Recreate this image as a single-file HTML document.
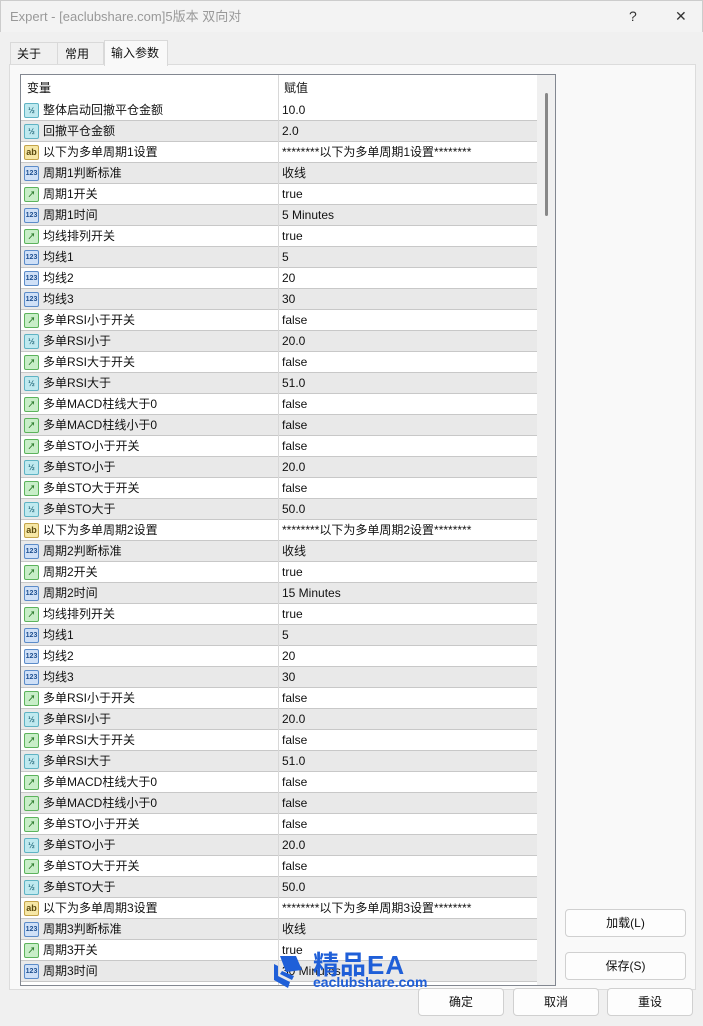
<!DOCTYPE html>
<html><head><meta charset="utf-8"><style>
*{margin:0;padding:0;box-sizing:border-box}
body{width:703px;height:1026px;background:#f0f0f0;font-family:"Liberation Sans","Noto Sans CJK SC",sans-serif;font-size:12px;color:#111;position:relative;overflow:hidden}
.title{position:absolute;left:0;top:0;width:703px;height:32px;background:#f3f3f3;border:1px solid #ccc;border-bottom:none}
.title span{position:absolute;left:9px;top:0;line-height:32px;font-size:13px;color:#999}
.tb{position:absolute;top:0;line-height:30px;font-size:14px;color:#333}
.tab{position:absolute;top:42px;height:23px;border:1px solid #d9d9d9;border-bottom:none;background:#f0f0f0;padding-left:6px;line-height:22px}
.tab.act{top:40px;height:26px;background:#f9f9f9;z-index:2;line-height:24px}
.panel{position:absolute;left:9px;top:64px;width:687px;height:926px;background:#f9f9f9;border:1px solid #dcdcdc}
.list{position:absolute;left:20px;top:74px;width:536px;height:912px;background:#fff;border:1px solid #828790;overflow:hidden}
.hdr{position:absolute;left:0;top:0;width:516px;height:25px;background:#fff;line-height:25px}
.hdr span{position:absolute;top:1px}
.row{position:absolute;left:0;width:516px;height:21px;border-bottom:1px solid #c8c8c8;line-height:20px}
.row.g{background:#e9e9e9}
.row .n{position:absolute;left:22px;top:0}
.row .v{position:absolute;left:261px;top:0}
.vl{position:absolute;left:257px;top:0;width:1px;height:912px;background:#d8d8d8}
.ic{position:absolute;left:3px;top:3px;width:15px;height:15px;border-radius:2px;font-size:8px;font-weight:bold;text-align:center;line-height:13px}
.d{background:#bfe9ef;border:1px solid #5fb3c4;color:#2a6f80}
.a{background:#f6e7a6;border:1px solid #c4a44a;color:#5a4a10;font-size:9px}
.i{background:#cfe0f7;border:1px solid #5c8cc9;color:#1e4f90;font-size:7px}
.b{background:#c8eec8;border:1px solid #5cb35c;color:#2a7a2a}
.sb{position:absolute;left:516px;top:0;width:18px;height:912px;background:#f0f0f0}
.th{position:absolute;left:8px;top:18px;width:3px;height:123px;background:#888;border-radius:2px}
.btn{position:absolute;height:28px;background:#fdfdfd;border:1px solid #d0d0d0;border-radius:4px;text-align:center;line-height:26px;font-size:12px}
.wm1{position:absolute;left:313px;top:945px;font-size:26px;font-weight:bold;color:#1f5fd8;letter-spacing:1px}
.wm2{position:absolute;left:313px;top:974px;font-size:14px;font-weight:bold;color:#1f5fd8}
</style></head><body>
<div class="title"><span>Expert - [eaclubshare.com]5版本 双向对</span><div class="tb" style="left:628px">?</div><div class="tb" style="left:674px">✕</div></div>
<div class="tab" style="left:10px;width:48px">关于</div>
<div class="tab" style="left:57px;width:47px;padding-left:7px">常用</div>
<div class="tab act" style="left:104px;width:64px">输入参数</div>
<div class="panel"></div>
<div class="list">
<div class="hdr"><span style="left:6px">变量</span><span style="left:263px">赋值</span></div>
<div class="row" style="top:25px"><div class="ic d">½</div><span class="n">整体启动回撤平仓金额</span><span class="v">10.0</span></div>
<div class="row g" style="top:46px"><div class="ic d">½</div><span class="n">回撤平仓金额</span><span class="v">2.0</span></div>
<div class="row" style="top:67px"><div class="ic a">ab</div><span class="n">以下为多单周期1设置</span><span class="v">********以下为多单周期1设置********</span></div>
<div class="row g" style="top:88px"><div class="ic i">123</div><span class="n">周期1判断标准</span><span class="v">收线</span></div>
<div class="row" style="top:109px"><div class="ic b">↗</div><span class="n">周期1开关</span><span class="v">true</span></div>
<div class="row g" style="top:130px"><div class="ic i">123</div><span class="n">周期1时间</span><span class="v">5 Minutes</span></div>
<div class="row" style="top:151px"><div class="ic b">↗</div><span class="n">均线排列开关</span><span class="v">true</span></div>
<div class="row g" style="top:172px"><div class="ic i">123</div><span class="n">均线1</span><span class="v">5</span></div>
<div class="row" style="top:193px"><div class="ic i">123</div><span class="n">均线2</span><span class="v">20</span></div>
<div class="row g" style="top:214px"><div class="ic i">123</div><span class="n">均线3</span><span class="v">30</span></div>
<div class="row" style="top:235px"><div class="ic b">↗</div><span class="n">多单RSI小于开关</span><span class="v">false</span></div>
<div class="row g" style="top:256px"><div class="ic d">½</div><span class="n">多单RSI小于</span><span class="v">20.0</span></div>
<div class="row" style="top:277px"><div class="ic b">↗</div><span class="n">多单RSI大于开关</span><span class="v">false</span></div>
<div class="row g" style="top:298px"><div class="ic d">½</div><span class="n">多单RSI大于</span><span class="v">51.0</span></div>
<div class="row" style="top:319px"><div class="ic b">↗</div><span class="n">多单MACD柱线大于0</span><span class="v">false</span></div>
<div class="row g" style="top:340px"><div class="ic b">↗</div><span class="n">多单MACD柱线小于0</span><span class="v">false</span></div>
<div class="row" style="top:361px"><div class="ic b">↗</div><span class="n">多单STO小于开关</span><span class="v">false</span></div>
<div class="row g" style="top:382px"><div class="ic d">½</div><span class="n">多单STO小于</span><span class="v">20.0</span></div>
<div class="row" style="top:403px"><div class="ic b">↗</div><span class="n">多单STO大于开关</span><span class="v">false</span></div>
<div class="row g" style="top:424px"><div class="ic d">½</div><span class="n">多单STO大于</span><span class="v">50.0</span></div>
<div class="row" style="top:445px"><div class="ic a">ab</div><span class="n">以下为多单周期2设置</span><span class="v">********以下为多单周期2设置********</span></div>
<div class="row g" style="top:466px"><div class="ic i">123</div><span class="n">周期2判断标准</span><span class="v">收线</span></div>
<div class="row" style="top:487px"><div class="ic b">↗</div><span class="n">周期2开关</span><span class="v">true</span></div>
<div class="row g" style="top:508px"><div class="ic i">123</div><span class="n">周期2时间</span><span class="v">15 Minutes</span></div>
<div class="row" style="top:529px"><div class="ic b">↗</div><span class="n">均线排列开关</span><span class="v">true</span></div>
<div class="row g" style="top:550px"><div class="ic i">123</div><span class="n">均线1</span><span class="v">5</span></div>
<div class="row" style="top:571px"><div class="ic i">123</div><span class="n">均线2</span><span class="v">20</span></div>
<div class="row g" style="top:592px"><div class="ic i">123</div><span class="n">均线3</span><span class="v">30</span></div>
<div class="row" style="top:613px"><div class="ic b">↗</div><span class="n">多单RSI小于开关</span><span class="v">false</span></div>
<div class="row g" style="top:634px"><div class="ic d">½</div><span class="n">多单RSI小于</span><span class="v">20.0</span></div>
<div class="row" style="top:655px"><div class="ic b">↗</div><span class="n">多单RSI大于开关</span><span class="v">false</span></div>
<div class="row g" style="top:676px"><div class="ic d">½</div><span class="n">多单RSI大于</span><span class="v">51.0</span></div>
<div class="row" style="top:697px"><div class="ic b">↗</div><span class="n">多单MACD柱线大于0</span><span class="v">false</span></div>
<div class="row g" style="top:718px"><div class="ic b">↗</div><span class="n">多单MACD柱线小于0</span><span class="v">false</span></div>
<div class="row" style="top:739px"><div class="ic b">↗</div><span class="n">多单STO小于开关</span><span class="v">false</span></div>
<div class="row g" style="top:760px"><div class="ic d">½</div><span class="n">多单STO小于</span><span class="v">20.0</span></div>
<div class="row" style="top:781px"><div class="ic b">↗</div><span class="n">多单STO大于开关</span><span class="v">false</span></div>
<div class="row g" style="top:802px"><div class="ic d">½</div><span class="n">多单STO大于</span><span class="v">50.0</span></div>
<div class="row" style="top:823px"><div class="ic a">ab</div><span class="n">以下为多单周期3设置</span><span class="v">********以下为多单周期3设置********</span></div>
<div class="row g" style="top:844px"><div class="ic i">123</div><span class="n">周期3判断标准</span><span class="v">收线</span></div>
<div class="row" style="top:865px"><div class="ic b">↗</div><span class="n">周期3开关</span><span class="v">true</span></div>
<div class="row g" style="top:886px"><div class="ic i">123</div><span class="n">周期3时间</span><span class="v">30 Minutes</span></div>
<div class="vl"></div>
<div class="sb"><div class="th"></div></div>
</div>
<svg style="position:absolute;left:270px;top:952px" width="40" height="38" viewBox="0 0 40 38"><path d="M4 12 L4 28 L18 36 L20 30 L8 24 L8 14Z" fill="#1f5fd8"/><path d="M10 4 L26 4 L32 18 L16 20Z" fill="#1f5fd8"/><path d="M10 22 L22 28 L24 24 L12 19Z" fill="#1f5fd8"/></svg>
<div class="wm1">精品EA</div>
<div class="wm2">eaclubshare.com</div>
<div class="btn" style="left:565px;top:909px;width:121px">加载(L)</div>
<div class="btn" style="left:565px;top:952px;width:121px">保存(S)</div>
<div class="btn" style="left:418px;top:988px;width:86px">确定</div>
<div class="btn" style="left:513px;top:988px;width:86px">取消</div>
<div class="btn" style="left:607px;top:988px;width:86px">重设</div>
</body></html>
